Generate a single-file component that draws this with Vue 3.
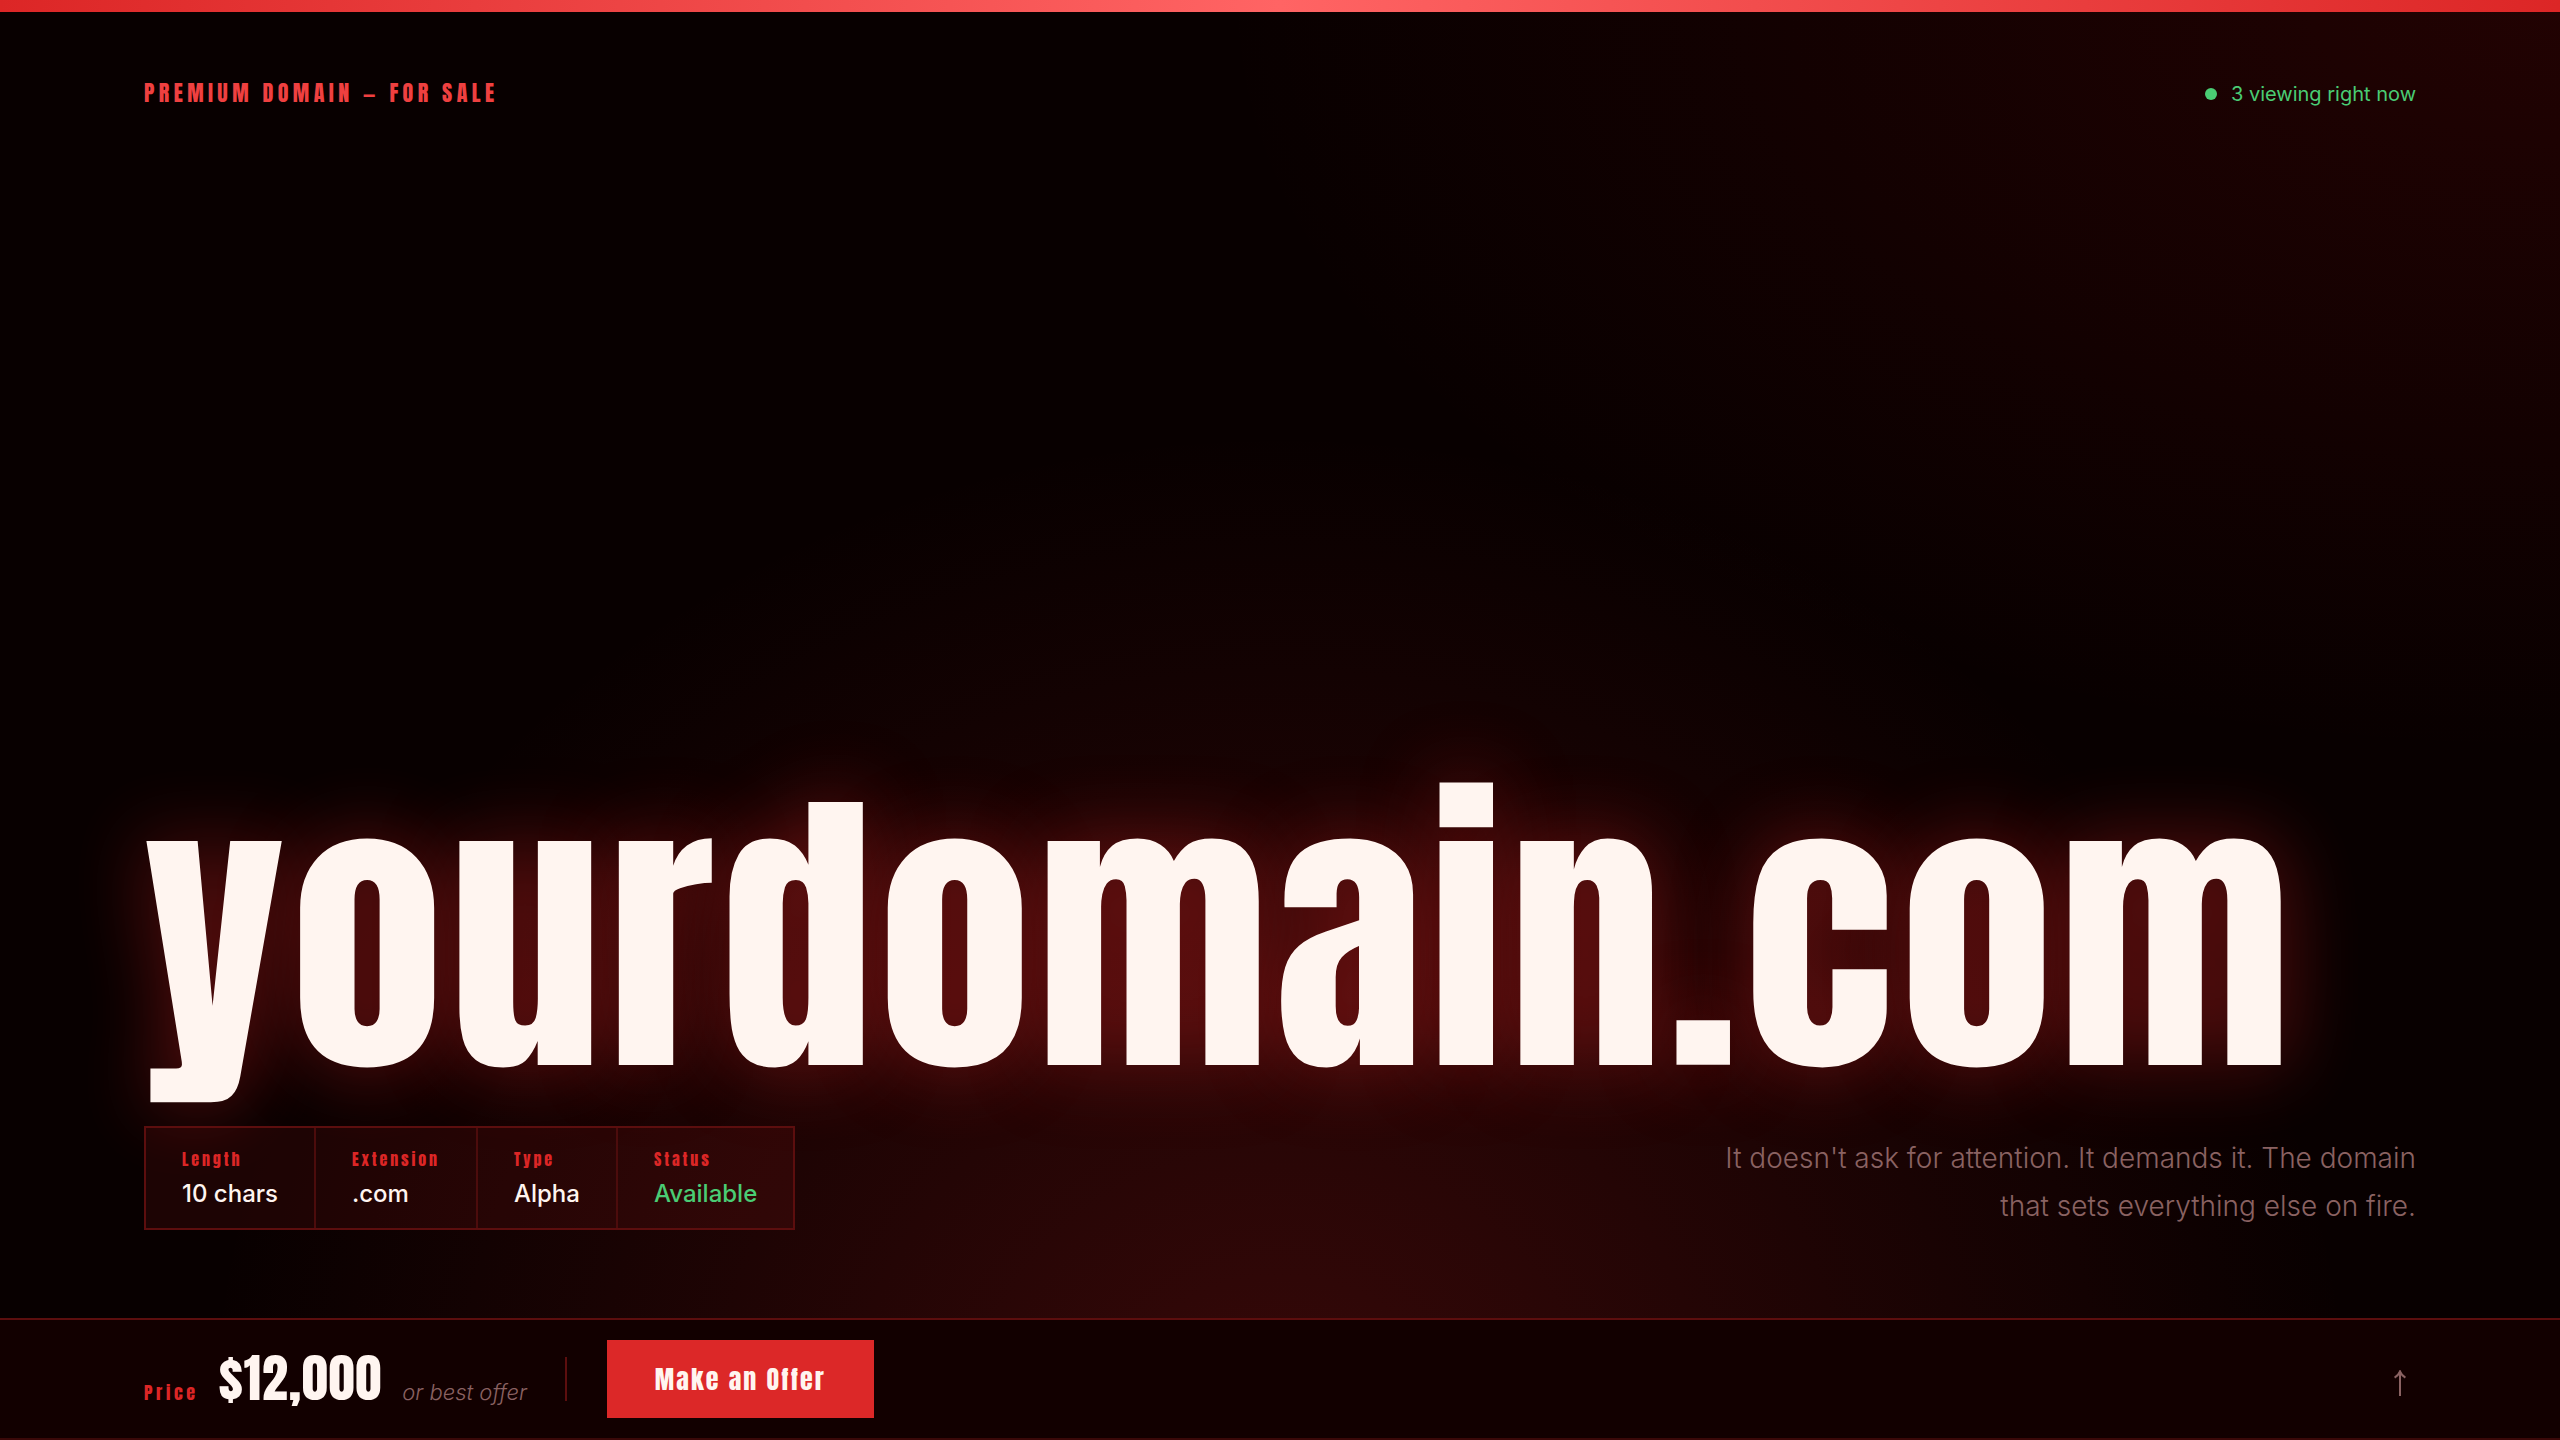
<script setup>
const facts = [
  { label: 'Length', value: '10 chars' },
  { label: 'Extension', value: '.com' },
  { label: 'Type', value: 'Alpha' },
  { label: 'Status', value: 'Available', live: true },
]
</script>

<template>
  <div class="page">
    <div class="strip"></div>
    <header class="top">
      <span class="tag">PREMIUM DOMAIN — FOR SALE</span>
      <span class="viewers"><i class="dot"></i>3 viewing right now</span>
    </header>

    <main class="hero">
      <h1 class="domain">yourdomain.com</h1>
      <div class="details">
        <dl class="facts">
          <div v-for="fact in facts" :key="fact.label" class="fact">
            <dt>{{ fact.label }}</dt>
            <dd :class="{ live: fact.live }">{{ fact.value }}</dd>
          </div>
        </dl>
        <p class="tagline">It doesn't ask for attention. It demands it. The domain that sets everything else on fire.</p>
      </div>
    </main>

    <footer class="bar">
      <div class="price">
        <span class="price-label">Price</span>
        <span class="amount">$12,000</span>
        <span class="note">or best offer</span>
      </div>
      <span class="divider"></span>
      <button class="offer" type="button">Make an Offer</button>
      <button class="up" type="button" aria-label="Back to top">
        <svg width="12" height="26" viewBox="0 0 12 26" fill="none" stroke="currentColor" stroke-width="2">
          <path d="M6 26V1.5M0.6 7.6C3 6.2 5 4 6 1.4C7 4 9 6.2 11.4 7.6" />
        </svg>
      </button>
    </footer>
  </div>
</template>

<style>
body {
  background: #080000;
}
</style>

<style scoped>
.page {
  display: flex;
  flex-direction: column;
  min-height: 100vh;
  box-sizing: border-box;
  overflow: hidden;
  color: #fff5f0;
  font-family: Inter, "Liberation Sans", sans-serif;
  background:
    radial-gradient(ellipse 60% 100% at 50% 100%, rgba(220, 38, 38, 0.22), transparent 70%),
    radial-gradient(ellipse 75% 75% at 100% 0%, rgba(220, 20, 20, 0.12), transparent 70%),
    #080000;
}

.strip {
  height: 12px;
  background: linear-gradient(90deg, #dc2626, #ff6464 50%, #dc2626);
}

.top {
  display: flex;
  align-items: center;
  justify-content: space-between;
  padding: 64px 144px 0;
}

.tag {
  font: 400 22px/34px Anton, sans-serif;
  letter-spacing: 0.2em;
  color: #ef4040;
}

.viewers {
  display: flex;
  align-items: center;
  gap: 14px;
  padding-top: 2px;
  font-size: 20px;
  line-height: 26px;
  color: #4acc74;
}

.dot {
  width: 12px;
  height: 12px;
  border-radius: 50%;
  background: #4acc74;
}

.hero {
  flex: 1;
  display: flex;
  flex-direction: column;
  justify-content: flex-end;
  padding: 0 144px 88px;
}

.domain {
  margin: 0 0 56px;
  font: 400 clamp(64px, 12vw, 306px)/0.88 Anton, sans-serif;
  letter-spacing: 0.02em;
  white-space: nowrap;
  text-shadow: 0 0 80px rgba(220, 38, 38, 0.45);
}

.details {
  display: flex;
  align-items: flex-end;
  justify-content: space-between;
}

.facts {
  display: flex;
  margin: 0;
  border: 2px solid #5c0e0e;
  background: rgba(220, 38, 38, 0.1);
}

.fact {
  padding: 16px 36px;
  border-right: 2px solid #4c0c0c;
}

.fact:last-child {
  border-right: 0;
}

dt {
  margin-bottom: 2px;
  font: 400 16px/30px Anton, sans-serif;
  letter-spacing: 0.18em;
  color: #dc2626;
}

dd {
  margin: 0;
  font-size: 24px;
  font-weight: 500;
  line-height: 36px;
}

.live {
  color: #4acc74;
}

.tagline {
  width: 720px;
  margin: 0;
  font-size: 28px;
  font-weight: 300;
  line-height: 48px;
  text-align: right;
  color: #8a6262;
}

.bar {
  display: flex;
  align-items: center;
  padding: 20px 144px;
  border-top: 2px solid #5c0e0e;
  border-bottom: 2px solid #3a0808;
  background: #120000;
}

.price {
  display: flex;
  align-items: baseline;
  gap: 20px;
}

.price-label {
  font: 400 18px/28px Anton, sans-serif;
  letter-spacing: 0.2em;
  color: #dc2626;
}

.amount {
  font: 400 52px/52px Anton, sans-serif;
  letter-spacing: 0.02em;
}

.note {
  font-size: 22px;
  font-weight: 300;
  font-style: italic;
  color: #8a6262;
}

.divider {
  width: 2px;
  height: 44px;
  margin: 0 40px 0 38px;
  background: #5c0e0e;
}

.offer {
  padding: 19px 48px;
  border: 0;
  background: #dc2828;
  color: #fff5f0;
  font: 400 26px/40px Anton, sans-serif;
  letter-spacing: 0.08em;
}

.up {
  display: flex;
  justify-content: center;
  width: 32px;
  margin-left: auto;
  padding: 8px 0 0;
  border: 0;
  background: none;
  color: #8a6262;
}
</style>
